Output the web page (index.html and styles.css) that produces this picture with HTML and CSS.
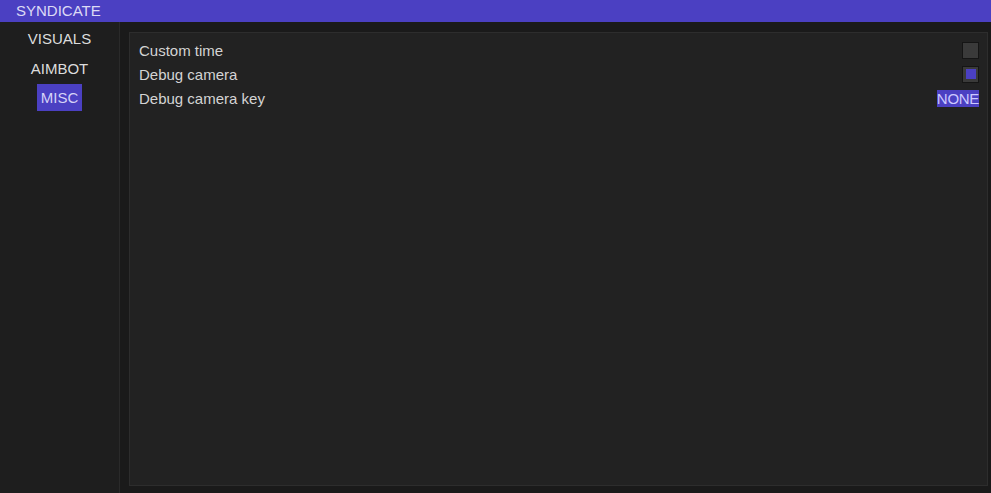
FILE: index.html
```html
<!DOCTYPE html>
<html>
<head>
<meta charset="utf-8">
<link rel="stylesheet" href="styles.css">
</head>
<body>
<div class="app">
  <header class="titlebar">SYNDICATE</header>
  <div class="main">
    <nav class="sidebar">
      <div class="tab">VISUALS</div>
      <div class="tab">AIMBOT</div>
      <div class="tab"><span class="tab-label active">MISC</span></div>
    </nav>
    <section class="content">
      <div class="panel">
        <div class="row">
          <span class="label">Custom time</span>
          <span class="checkbox"></span>
        </div>
        <div class="row">
          <span class="label">Debug camera</span>
          <span class="checkbox checked"><span class="check-fill"></span></span>
        </div>
        <div class="row">
          <span class="label">Debug camera key</span>
          <span class="keybind">NONE</span>
        </div>
      </div>
    </section>
  </div>
</div>
</body>
</html>
```
FILE: styles.css
```css
* { box-sizing: border-box; }
html, body {
  margin: 0;
  padding: 0;
  width: 991px;
  height: 493px;
  overflow: hidden;
  background: #1a1a1a;
  font-family: "Liberation Sans", Arial, sans-serif;
  font-size: 15px;
  color: #d6d6d6;
}
.app {
  display: flex;
  flex-direction: column;
  height: 493px;
}
.titlebar {
  height: 22px;
  line-height: 22px;
  padding-left: 16px;
  background: #4b40c2;
  color: #dcdaf5;
  flex: none;
}
.main {
  flex: 1;
  display: flex;
  min-height: 0;
}
.sidebar {
  width: 120px;
  flex: none;
  background: #1e1e1e;
  border-right: 1px solid #2a2a2a;
  padding-top: 2px;
  display: flex;
  flex-direction: column;
  align-items: center;
  gap: 3px;
}
.tab {
  height: 27px;
  line-height: 29px;
  color: #dcdcdc;
  text-align: center;
}
.tab-label.active {
  display: inline-block;
  vertical-align: top;
  background: #4b40c2;
  color: #d6d3f7;
  padding: 0 4px;
  height: 27px;
  line-height: 28px;
}
.content {
  flex: 1;
  padding: 10px 3px 7px 9px;
  display: flex;
}
.panel {
  flex: 1;
  background: #222222;
  border: 1px solid #2d2d2d;
  padding: 5px 8px 0 9px;
  display: flex;
  flex-direction: column;
}
.row {
  height: 24px;
  display: flex;
  align-items: center;
  justify-content: space-between;
}
.label {
  color: #d4d4d4;
}
.checkbox {
  width: 17px;
  height: 17px;
  background: #3a3a3a;
  border: 1px solid #151515;
  display: grid;
  place-items: center;
}
.check-fill {
  width: 10px;
  height: 10px;
  background: #4b40c2;
}
.keybind {
  background: #4b40c2;
  color: #cdc9ff;
  height: 17px;
  line-height: 17px;
  letter-spacing: -0.3px;
}
```
